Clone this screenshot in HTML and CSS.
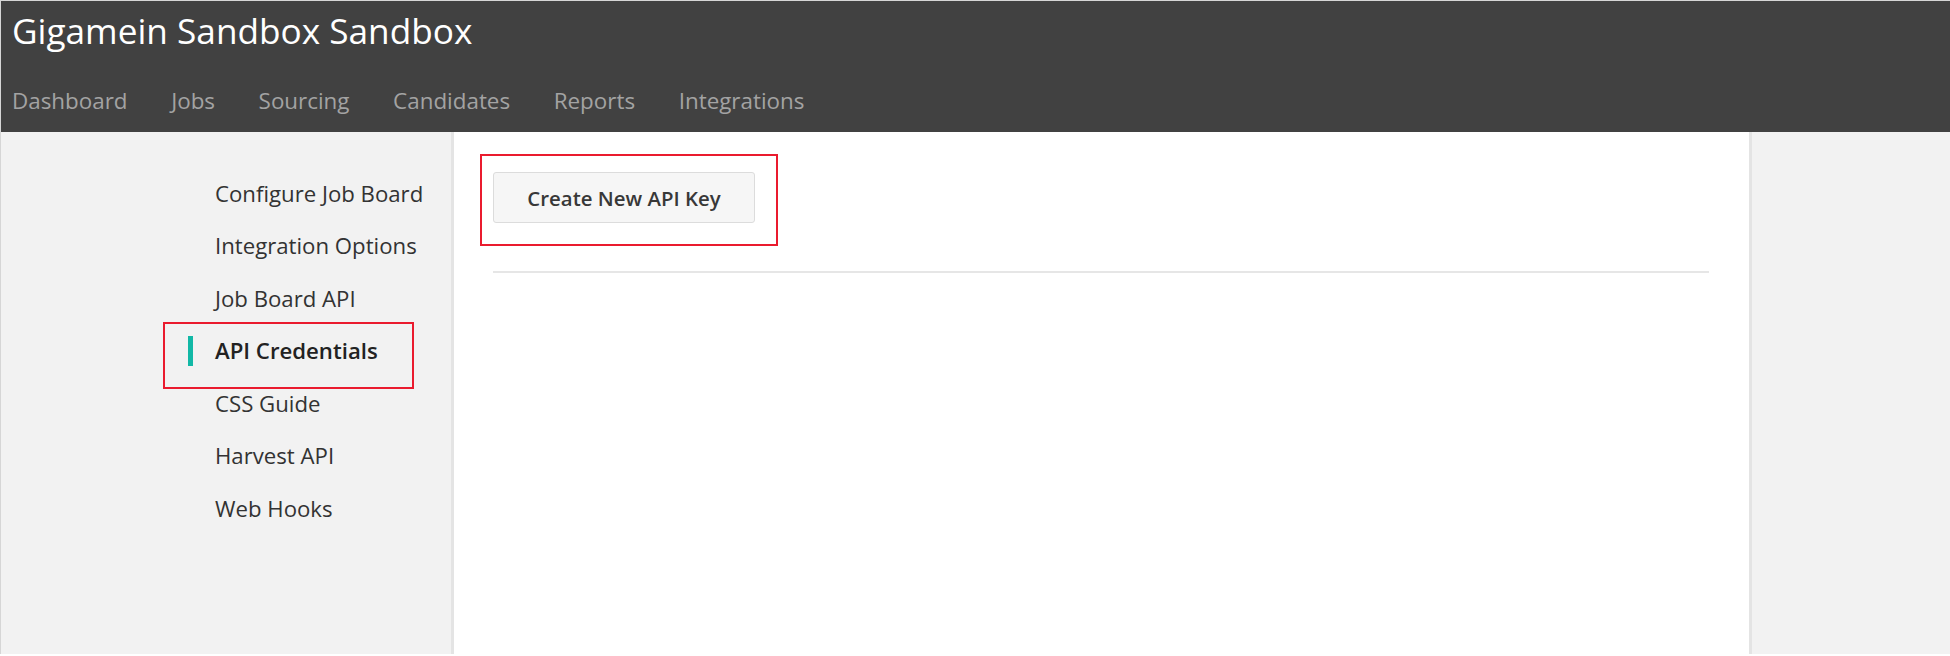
FILE: index.html
```html
<!DOCTYPE html>
<html lang="en">
<head>
    <meta charset="UTF-8">
    <meta name="viewport" content="width=device-width, initial-scale=1.0">
    <title>API Credentials</title>
    <link rel="stylesheet" href="styles.css">
</head>
<body>
    <div class="page">
        <header class="topbar">
            <div class="brand">Gigamein Sandbox Sandbox</div>
            <nav class="mainnav">
                <a href="#">Dashboard</a>
                <a href="#">Jobs</a>
                <a href="#">Sourcing</a>
                <a href="#">Candidates</a>
                <a href="#">Reports</a>
                <a href="#">Integrations</a>
            </nav>
        </header>
        <div class="layout">
            <aside class="sidebar">
                <a class="side-link" href="#">Configure Job Board</a>
                <a class="side-link" href="#">Integration Options</a>
                <a class="side-link" href="#">Job Board API</a>
                <a class="side-link active" href="#">API Credentials</a>
                <a class="side-link" href="#">CSS Guide</a>
                <a class="side-link" href="#">Harvest API</a>
                <a class="side-link" href="#">Web Hooks</a>
            </aside>
            <main class="content">
                <div class="action">
                    <button type="button" class="btn">Create New API Key</button>
                </div>
                <hr class="divider">
            </main>
            <div class="rail"></div>
        </div>
    </div>
</body>
</html>
```

FILE: styles.css
```css
body {
    margin: 0;
    padding: 0;
    background-color: #fff;
    font-family: "Open Sans", "Liberation Sans", Arial, sans-serif;
}

.page {
    height: 653px;
    border-top: 1px solid #d6d6d6;
    border-left: 1px solid #d6d6d6;
    display: flex;
    flex-direction: column;
}

.topbar {
    background-color: #414141;
    height: 131px;
    padding: 0 11px;
    box-sizing: border-box;
}

.brand {
    color: #fff;
    font-size: 35.2px;
    line-height: 48px;
    margin-top: 5px;
}

.mainnav {
    display: flex;
    gap: 43.6px;
    margin-top: 27px;
}

.mainnav a {
    color: #a3a3a3;
    font-size: 22.4px;
    line-height: 40px;
    text-decoration: none;
}

.layout {
    flex: 1;
    display: grid;
    grid-template-columns: 453px 1fr 201px;
}

.sidebar {
    background-color: #f2f2f2;
    border-right: 3px solid #e4e4e4;
    padding: 35px 0 0 214px;
    display: flex;
    flex-direction: column;
}

.side-link {
    display: flex;
    align-items: center;
    height: 52.5px;
    font-size: 22.2px;
    color: #333;
    text-decoration: none;
}

.side-link.active {
    position: relative;
    margin-left: -27px;
    font-weight: 600;
    color: #222;
}

.side-link.active::before {
    content: "";
    width: 5px;
    height: 30px;
    background-color: #12b8a6;
    margin-right: 22px;
}

/* annotation box */
.side-link.active::after {
    content: "";
    position: absolute;
    left: -25px;
    top: -3px;
    width: 251px;
    height: 67px;
    border: 2px solid #ea1b2e;
    box-sizing: border-box;
}

.content {
    padding: 40px 40px 0 39px;
}

.action {
    position: relative;
    display: inline-block;
}

.action::after {
    content: "";
    position: absolute;
    left: -13px;
    top: -18px;
    width: 298px;
    height: 92px;
    border: 2px solid #ea1b2e;
    box-sizing: border-box;
}

.btn {
    display: block;
    height: 51px;
    width: 262px;
    background-color: #f6f6f6;
    border: 1px solid #dcdcdc;
    border-radius: 3px;
    font-family: "Open Sans", "Liberation Sans", Arial, sans-serif;
    font-size: 20.4px;
    font-weight: 600;
    color: #383838;
    cursor: pointer;
}

.divider {
    border: none;
    border-top: 2px solid #e6e6e6;
    margin: 48px 0 0 0;
}

.rail {
    background-color: #f2f2f2;
    border-left: 3px solid #e4e4e4;
}
```
